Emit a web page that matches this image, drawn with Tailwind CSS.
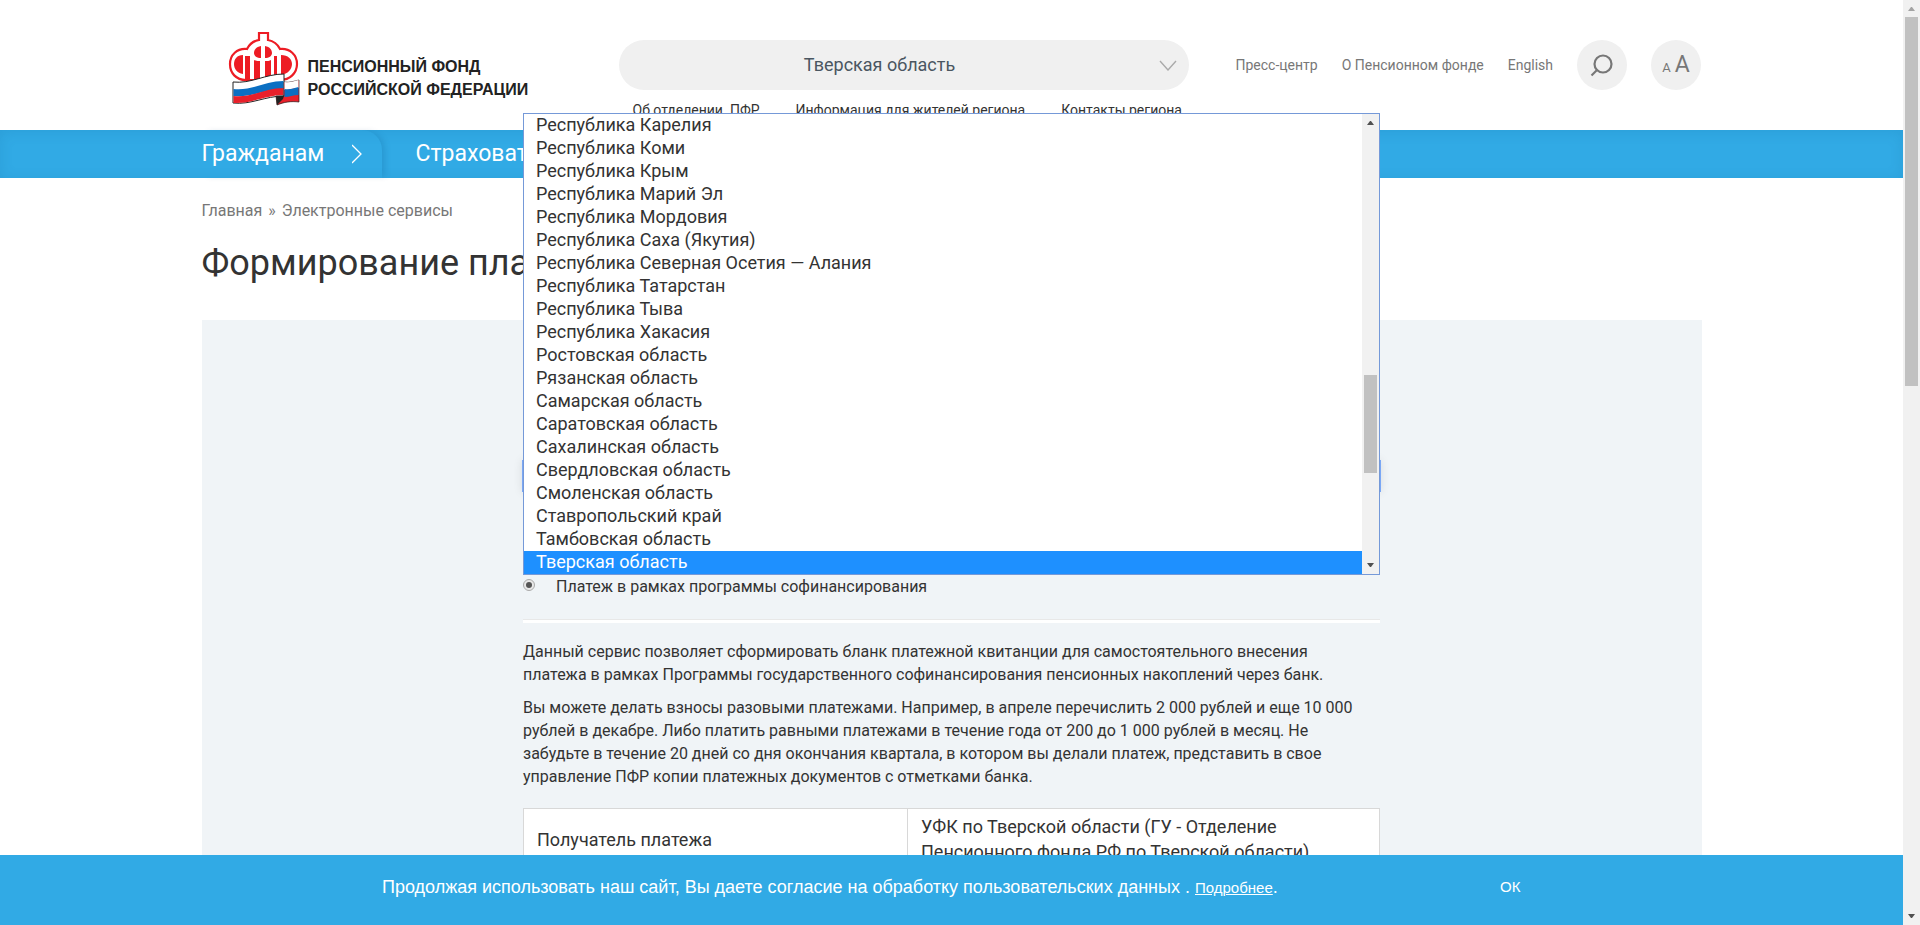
<!DOCTYPE html>
<html lang="ru">
<head>
<meta charset="utf-8">
<title>Формирование платежных документов</title>
<script src="https://cdn.jsdelivr.net/npm/@tailwindcss/browser@4"></script>
</head>
<body class="relative h-screen overflow-hidden bg-white pr-[17px] font-['Roboto',sans-serif] text-[#333]">
<header class="mx-auto flex h-[130px] max-w-[1500px] items-start">
  <a href="#" class="ml-[26px] mt-[31px] flex w-[391px] shrink-0 font-['Liberation_Sans',sans-serif] text-base font-bold text-[#222]" aria-label="Пенсионный фонд Российской Федерации">
    <svg class="shrink-0" width="73" height="75" viewBox="0 0 73 75">
      <path d="M31 2h9v7c6 1 10 5 12 9c10-1 17 6 17 15s-7 16-17 16H18C8 49 2 42 2 33s7-16 17-15c2-4 6-8 12-9z" fill="#fff" stroke="#ed1c24" stroke-width="2.2"/>
      <path d="M15 24C9 24 6 28 6 33s3 9 9 10zM53 24c7 0 11 4 11 9s-4 10-11 11z" fill="#ed1c24"/>
      <path d="M33 15c-5 1-7 4-7 7s3 5 7 5zM37 15c5 1 7 4 7 7s-3 5-7 5z" fill="#ed1c24"/>
      <path d="M17 25h5v24h-5zM26 29c2 1 5 1 6 1v18h-6zM37 30c2 0 5 0 6-1v18h-6zM46 25h3v20h-3z" fill="#ed1c24"/>
      <path d="M5 51c18 2 32-8 51-8v22c-19 0-33 9-51 7z" fill="#fff" stroke="#222"/>
      <path d="M5.500 58c18 2 32-8 50-8v8c-18 0-32 9-50 7z" fill="#0b6fc2"/>
      <path d="M5.500 65c18 2 32-8 50-8v7c-18 0-32 9-50 8z" fill="#e8202a"/>
      <path d="M56 51c6 1 10-1 15-2v22c-8-1-15 0-22 3l-1-9h8z" fill="#e8202a" stroke="#222" stroke-width=".7"/>
      <path d="M56.500 51c6 1 9-1 14-2v8c-5 0-9 2-14 2z" fill="#fff"/>
      <path d="M56.500 58c6 1 9-1 14-2v8c-5 0-9 2-14 2z" fill="#0b6fc2"/>
      <path d="M48 65h8l-1 3-6 6z" fill="#222"/>
    </svg>
    <span class="ml-[7px] mt-6 whitespace-nowrap leading-[23px]">ПЕНСИОННЫЙ ФОНД<br>РОССИЙСКОЙ ФЕДЕРАЦИИ</span>
  </a>
  <div class="mt-10 w-[570px] shrink-0">
    <button class="relative flex h-[50px] w-full items-center justify-center rounded-full bg-[#f0f0f0] pr-12 text-lg text-[#4a5661]">Тверская область
      <svg class="absolute right-3 top-5" width="18" height="11" viewBox="0 0 18 11" fill="none" stroke="#aaa" stroke-width="1.4"><path d="M1 1l8 9 8-9"/></svg>
    </button>
    <nav class="ml-3.5 mt-2.5 flex gap-9 whitespace-pre text-sm leading-5"><a href="#">Об отделении  ПФР</a><a href="#">Информация для жителей региона</a><a href="#">Контакты региона</a></nav>
  </div>
  <nav class="ml-[47px] mt-10 flex h-[50px] shrink-0 items-center gap-6 whitespace-nowrap text-sm text-[#777]">
    <a href="#">Пресс-центр</a><a href="#">О Пенсионном фонде</a><a href="#">English</a>
    <button aria-label="Поиск" class="flex size-[50px] items-center justify-center rounded-full bg-[#f0f0f0]">
      <svg width="24" height="24" viewBox="0 0 24 24" fill="none" stroke="#777" stroke-width="2.2"><circle cx="13" cy="11" r="8.500"/><path d="M7.500 16.500l-6 6"/></svg>
    </button>
    <button aria-label="Размер шрифта" class="flex size-[50px] items-baseline justify-center gap-1 rounded-full bg-[#f0f0f0] text-[#777]"><span class="text-[13px]">A</span><span class="text-[23px] leading-[50px]">A</span></button>
  </nav>
</header>
<nav class="h-12 bg-[#31aae5] shadow-[inset_0_2px_14px_rgba(0,70,120,0.12)]">
  <div class="mx-auto flex h-full max-w-[1500px] text-[23px] leading-[48px] text-white">
    <a href="#" class="flex w-[180px] items-center justify-between rounded-tr-[20px] pr-5 shadow-[5px_0_6px_-2px_rgba(0,70,120,0.18)]">Гражданам
      <svg width="10" height="20" viewBox="0 0 10 20" fill="none" stroke="#fff" stroke-width="1.3"><path d="M0 1l9 9-9 9"/></svg>
    </a>
    <a href="#" class="ml-[34px]">Страхователям</a>
  </div>
</nav>
<main class="mx-auto max-w-[1500px]">
  <p class="pt-[21px] leading-6 text-[#777]"><a href="#">Главная</a> <span class="mx-0.5">»</span> <a href="#">Электронные сервисы</a></p>
  <h1 class="mt-[18px] text-4xl leading-[44px]">Формирование платежных документов</h1>
  <section class="mt-[35px] bg-[#f0f4f7] pb-10 pt-[140px]">
    <div class="relative mx-auto max-w-[857px]">
      <select aria-label="Регион" class="-mx-px block h-8 w-[859px] appearance-none border border-[#7aa7f5] bg-white text-lg shadow-[0_0_10px_rgba(0,0,0,0.1)]"><option>Тверская область</option></select>
      <div class="absolute inset-x-0 bottom-full z-10 -mb-[115px] flex border border-[#7599d8] bg-white">
        <select size="20" aria-label="Список регионов" class="h-[460px] min-w-0 flex-1 appearance-none overflow-hidden border-0 bg-white p-0 text-lg text-[#333] outline-none [&>option]:block [&>option]:h-[23px] [&>option]:min-h-0 [&>option]:px-3 [&>option]:py-0 [&>option]:leading-[23px] [&>option:checked]:bg-[linear-gradient(#1e90ff,#1e90ff)] [&>option:checked]:text-white">
          <option>Республика Карелия</option><option>Республика Коми</option><option>Республика Крым</option><option>Республика Марий Эл</option><option>Республика Мордовия</option><option>Республика Саха (Якутия)</option><option>Республика Северная Осетия — Алания</option><option>Республика Татарстан</option><option>Республика Тыва</option><option>Республика Хакасия</option><option>Ростовская область</option><option>Рязанская область</option><option>Самарская область</option><option>Саратовская область</option><option>Сахалинская область</option><option>Свердловская область</option><option>Смоленская область</option><option>Ставропольский край</option><option>Тамбовская область</option><option selected>Тверская область</option>
        </select>
        <div class="flex w-[17px] shrink-0 flex-col items-center justify-between bg-[#f1f1f1] py-[7px]" aria-hidden="true">
          <svg width="7" height="4" viewBox="0 0 7 4" fill="#505050"><path d="M0 4h7L4 0H3z"/></svg>
          <div class="mt-[250px] h-[98px] w-[13px] bg-[#c1c1c1]"></div>
          <svg class="mt-auto" width="7" height="4" viewBox="0 0 7 4" fill="#505050"><path d="M0 0h7L4 4H3z"/></svg>
        </div>
      </div>
      <label class="mt-[83px] flex items-start leading-6"><input type="radio" checked class="mt-1 flex size-3 appearance-none items-center justify-center rounded-full border border-[#aaa] bg-[#e8e8e8] before:size-1.5 before:rounded-full before:bg-[#555]"><span class="ml-[21px]">Платеж в рамках программы софинансирования</span></label>
      <hr class="mt-5 h-1 border-0 border-t border-[#e8e8e8] bg-white">
      <p class="mt-[17px] pr-5 leading-[23px]">Данный сервис позволяет сформировать бланк платежной квитанции для самостоятельного внесения платежа в рамках Программы государственного софинансирования пенсионных накоплений через банк.</p>
      <p class="mt-2.5 pr-5 leading-[23px]">Вы можете делать взносы разовыми платежами. Например, в апреле перечислить 2 000 рублей и еще 10 000 рублей в декабре. Либо платить равными платежами в течение года от 200 до 1 000 рублей в месяц. Не забудьте в течение 20 дней со дня окончания квартала, в котором вы делали платеж, представить в свое управление ПФР копии платежных документов с отметками банка.</p>
      <table class="mt-5 w-full border-collapse bg-white text-lg leading-[25px]">
        <tr><th scope="row" class="w-[384px] border border-[#d8d8d8] px-[13px] text-left font-normal">Получатель платежа</th><td class="border border-[#d8d8d8] py-[5px] pl-[13px] pr-10">УФК по Тверской области (ГУ - Отделение Пенсионного фонда РФ по Тверской области)</td></tr>
      </table>
    </div>
  </section>
</main>
<aside class="fixed bottom-0 left-0 right-[17px] z-20 flex h-[70px] items-center bg-[#31aae5] pl-[382px] font-['Liberation_Sans',sans-serif] text-lg text-white">
  <p class="-mt-1.5 w-[1118px] whitespace-nowrap">Продолжая использовать наш сайт, Вы даете согласие на обработку пользовательских данных . <a href="#" class="text-[15px] underline">Подробнее</a>.</p>
  <button class="-mt-1.5 text-[15px]">ОК</button>
</aside>
<div class="fixed inset-y-0 right-0 z-30 flex w-[17px] flex-col items-center bg-[#f1f1f1] py-[7px]" aria-hidden="true">
  <svg class="shrink-0" width="7" height="4" viewBox="0 0 7 4" fill="#a3a3a3"><path d="M0 4h7L4 0H3z"/></svg>
  <div class="mt-1.5 h-[369px] w-[13px] bg-[#c1c1c1]"></div>
  <svg class="mt-auto shrink-0" width="7" height="4" viewBox="0 0 7 4" fill="#505050"><path d="M0 0h7L4 4H3z"/></svg>
</div>
</body>
</html>
